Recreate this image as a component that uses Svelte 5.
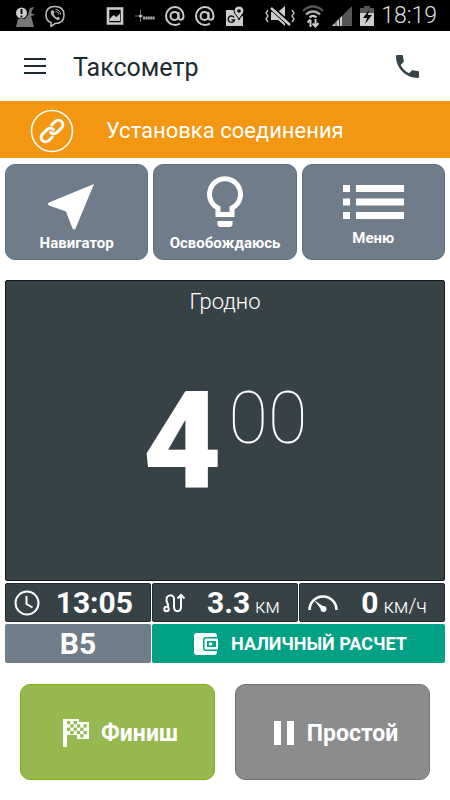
<script>
  let city = 'Гродно';
  let fare = { whole: '4', cents: '00' };
  let tariff = 'B5';

  let readings = [
    { icon: 'clock', value: '13:05', unit: '' },
    { icon: 'route', value: '3.3', unit: 'км' },
    { icon: 'gauge', value: '0', unit: 'км/ч' }
  ];

  // column and row of each dark cell of the finish flag
  let cells = [
    [0, 0], [2, 0], [1, 1], [3, 1], [5, 1], [0, 2], [2, 2], [4, 2],
    [1, 3], [3, 3], [5, 3], [4, 4]
  ];
</script>

<div class="screen">
  <div class="status">
    <div class="notes">
      <svg width="20" height="22" viewBox="0 0 20 22">
        <path d="M3 14h7l3-4 2-7 4-1-3 6 4 2-4 1 3 11H1z" fill="#777" />
        <circle cx="6.500" cy="8" r="5.500" fill="#ccc" />
        <path d="M6.500 4v5M6.500 10.500v2" stroke="#111" stroke-width="2" />
      </svg>
      <svg width="20" height="22" viewBox="0 0 20 22" fill="none" stroke="#bbb">
        <path d="M10 1.500c6 0 9 2.500 9 8.500 0 6-3 8.500-9 8.500l-4 3v-4C2.500 16.500 1 14 1 10c0-6 3-8.500 9-8.500z" stroke-width="1.600" />
        <path d="M6.500 5.500c-3 2 3 9.500 7 9.500 2-1 1.500-2 0-3l-2 .5c-1-.5-2.500-2.500-3-4l1-1c-.5-2-1.500-2.500-3-2z" fill="#bbb" stroke="none" />
        <path d="M10.500 4.500c3 0 5 2 5 5M10.500 6.500c2 0 3 1 3 3" />
      </svg>
      <span class="blank"></span>
      <svg width="20" height="22" viewBox="0 0 20 22">
        <path d="M3 3.500h14v15H3z" fill="none" stroke="#ccc" stroke-width="2.600" />
        <path d="M4.500 16v-2l4-4 3 2 3.500-3.500V16z" fill="#ccc" />
      </svg>
      <svg width="20" height="22" viewBox="0 0 20 22">
        <path d="M0 11h8M5.500 5v12" stroke="#777" />
        <circle cx="5.500" cy="11" r="1.500" fill="#ccc" />
        <path d="M8 13h12" stroke="#aaa" stroke-width="3" stroke-dasharray="2 .4" />
      </svg>
      {#each [1, 2] as mail (mail)}
        <svg width="20" height="22" viewBox="0 0 20 22" fill="none" stroke="#ccc" stroke-width="2">
          <circle cx="9.500" cy="11" r="4" />
          <path d="M13.500 7v5.500c0 3 5 3.500 5-1.500 0-5-3.500-9-8.700-9A8.800 9 0 0 0 1 11c0 5 4 9 9 9 2 0 3.500-.5 5-1.500" />
        </svg>
      {/each}
      <svg width="20" height="22" viewBox="0 0 20 22">
        <path d="M1 5h10l3 9 3-3h1v10H1z" fill="#ccc" />
        <path d="M9 12.300A3.200 3.200 0 1 0 9.500 15H6.500" fill="none" stroke="#111" stroke-width="1.400" />
        <path d="M14 1a5 5 0 0 0-5 5c0 3 4 5 5 9 1-4 5-6 5-9a5 5 0 0 0-5-5z" fill="#ccc" stroke="#000" />
        <circle cx="14" cy="6" r="1.800" fill="#000" />
      </svg>
    </div>
    <div class="system">
      <svg width="30" height="22" viewBox="0 0 30 22">
        <path d="M6 7h7l7-6v20l-7-6H6z" fill="#ccc" />
        <path d="M5 1.500l21 19" stroke="#000" stroke-width="5" />
        <path d="M6 3l19 17" stroke="#ccc" stroke-width="2.500" />
        <path d="M3 5l-2 3 2 3-2 3 2 3M27 5l2 3-2 3 2 3-2 3" fill="none" stroke="#bbb" stroke-width="1.400" />
      </svg>
      <svg width="22" height="24" viewBox="0 0 22 24" fill="none" stroke-width="2.400">
        <path d="M1 7c6-6 14-6 20 0" stroke="#555" />
        <path d="M4 10.500c4-4 10-4 14 0" stroke="#aaa" />
        <path d="M7.500 13.500c2-2 5-2 7 0" stroke="#ccc" />
        <path d="M8.500 23v-7M5.500 18.500l3-3M13.500 15v7M16.500 19l-3 3.500-3-3" stroke="#ccc" stroke-width="2" />
      </svg>
      <svg width="22" height="22" viewBox="0 0 22 22">
        <path d="M21 1v20H1z" fill="#555" />
        <path d="M11 11v10H1z" fill="#ccc" />
        <path d="M5 15v6M8.500 12v9" stroke="#333" />
      </svg>
      <svg width="14" height="22" viewBox="0 0 14 22">
        <path d="M4 1h6v2h4v6H0V3h4z" fill="#555" />
        <path d="M0 8h14v13H0z" fill="#ccc" />
        <path d="M9 5l-6 8h4l-2 6 7-9H8z" fill="#000" />
      </svg>
      <time>18:19</time>
    </div>
  </div>

  <header>
    <button class="plain" aria-label="Открыть меню">
      <svg width="22" height="16" viewBox="0 0 22 16" stroke="#1d2a2f" stroke-width="2">
        <path d="M0 1h22M0 8h22M0 15h22" />
      </svg>
    </button>
    <h1>Таксометр</h1>
    <button class="plain" aria-label="Позвонить">
      <svg width="23" height="23" viewBox="3 3 18 18" fill="#374347">
        <path d="M6.620 10.790c1.440 2.830 3.760 5.140 6.590 6.590l2.200-2.200c.27-.27.67-.36 1.020-.24 1.120.37 2.330.57 3.570.57.55 0 1 .45 1 1V20c0 .55-.45 1-1 1-9.390 0-17-7.610-17-17 0-.55.45-1 1-1h3.500c.55 0 1 .45 1 1 0 1.250.2 2.450.57 3.570.11.35.03.74-.25 1.020l-2.200 2.200z" />
      </svg>
    </button>
  </header>

  <div class="banner">
    <svg width="44" height="44" viewBox="0 0 44 44" fill="none" stroke="#fff">
      <circle cx="22" cy="22" r="20.500" stroke-width="1.600" />
      <g transform="rotate(-45 22 22)" stroke-width="3" stroke-linecap="round">
        <path d="M18 26.500h-5a4.500 4.500 0 0 1-4.500-4.500 4.500 4.500 0 0 1 4.500-4.500h6.500a4.500 4.500 0 0 1 4.500 4.500" />
        <path d="M26 17.500h5a4.500 4.500 0 0 1 4.500 4.500 4.500 4.500 0 0 1-4.500 4.500h-6.500a4.500 4.500 0 0 1-4.500-4.500" />
      </g>
    </svg>
    <span>Установка соединения</span>
  </div>

  <nav>
    <button>
      <svg width="58" height="46" viewBox="0 0 58 46" fill="#fff">
        <path d="M46 0L1 18.500q-2 1.500 0 3l17 6 6.500 17q1.500 2 3 0z" />
      </svg>
      Навигатор
    </button>
    <button>
      <svg width="36" height="54" viewBox="0 0 36 54">
        <path d="M11 38.500V32a15.500 15.500 0 1 1 14 0v6.500z" fill="none" stroke="#fff" stroke-width="5" />
        <path d="M10.500 45h15v3q0 3-3 3h-9q-3 0-3-3z" fill="#fff" />
      </svg>
      Освобождаюсь
    </button>
    <button class="list">
      <svg width="62" height="36" viewBox="0 0 62 36" stroke="#fff" stroke-width="7">
        <path d="M1 4.500h7M14 4.500h48M1 18h7M14 18h48M1 31.500h7M14 31.500h48" />
      </svg>
      Меню
    </button>
  </nav>

  <main>
    <section class="fare">
      <h2>{city}</h2>
      <p><strong>{fare.whole}</strong><span>{fare.cents}</span></p>
    </section>

    <div class="readings">
      {#each readings as item (item.icon)}
        <div class="reading">
          {#if item.icon === 'clock'}
            <svg width="26" height="26" viewBox="0 0 26 26" fill="none" stroke="#fff" stroke-width="2">
              <circle cx="13" cy="13" r="11.500" />
              <path d="M12.500 6v8l6 3.500" />
            </svg>
          {:else if item.icon === 'route'}
            <svg width="26" height="20" viewBox="-2 0 26 20" fill="none" stroke="#fff" stroke-width="2">
              <circle cx="3.500" cy="16" r="2.200" />
              <path d="M4.500 14c2-2-1-4-1-7 0-6 7.500-6 7.500-1v8c0 5.500 7 5.500 7 0V2M14.500 5.500L18 2l3.500 3.500" />
            </svg>
          {:else}
            <svg width="30" height="20" viewBox="1 0 30 20" fill="none" stroke="#fff">
              <path d="M2.500 17a13.500 13.500 0 0 1 27 0" stroke-width="2.600" />
              <path d="M7 7l11 7.500-3 3z" fill="#fff" stroke="none" />
              <circle cx="16.500" cy="16" r="3" fill="#fff" stroke="none" />
            </svg>
          {/if}
          <p><strong>{item.value}</strong>{#if item.unit}&nbsp;<span>{item.unit}</span>{/if}</p>
        </div>
      {/each}
    </div>

    <div class="payment">
      <button class="tariff">{tariff}</button>
      <button class="cash">
        <svg width="25" height="24" viewBox="0 0 25 24">
          <path d="M3 1h17q3 0 3 3v1H12q-3 0-3 3v8q0 3 3 3h11v1q0 3-3 3H3q-3 0-3-3V4q0-3 3-3z" fill="#fff" />
          <path d="M12 6.500h12v11H12q-1.500 0-1.500-1.500V8q0-1.500 1.500-1.500z" fill="#fff" />
          <path d="M13 9h9v6h-9z" fill="#00a185" />
          <circle cx="16.500" cy="12" r="1.800" fill="#fff" />
        </svg>
        НАЛИЧНЫЙ РАСЧЕТ
      </button>
    </div>
  </main>

  <footer>
    <button class="finish">
      <svg width="26" height="28" viewBox="0 0 26 28">
        <path d="M0 0h16v3h10v17H14v-4H4v12H0z" fill="#fff" />
        <g transform="translate(4 2) scale(3.300)" fill="#95b84f">
          {#each cells as [x, y] (`${x}-${y}`)}
            <rect {x} {y} width="1" height="1" />
          {/each}
        </g>
      </svg>
      Финиш
    </button>
    <button class="idle">
      <svg width="22" height="24" viewBox="0 0 22 24" fill="#fff">
        <path d="M1 0h7v24H1zM14 0h7v24h-7z" />
      </svg>
      Простой
    </button>
  </footer>
</div>

<style>
  :global(body) {
    margin: 0;
    background: #fff;
  }

  .screen {
    font-family: Roboto, 'Noto Sans', sans-serif;
    color: #fff;
  }

  svg {
    display: block;
    flex: none;
  }

  button {
    display: flex;
    align-items: center;
    justify-content: center;
    box-sizing: border-box;
    margin: 0;
    padding: 0;
    border: 0;
    font-family: inherit;
    font-weight: 700;
    color: #fff;
    cursor: pointer;
  }

  h1,
  h2,
  p {
    margin: 0;
    font-weight: 400;
  }

  .status {
    display: flex;
    justify-content: space-between;
    height: 31px;
    padding: 0 13px 0 15px;
    background: #000;
  }

  .notes,
  .system {
    display: flex;
    align-items: center;
    gap: 10px;
  }

  .system {
    gap: 7px;
  }

  .blank {
    width: 20px;
  }

  time {
    font-size: 23px;
    font-weight: 300;
    line-height: 32px;
    color: #ddd;
  }

  header {
    display: flex;
    align-items: center;
    gap: 27px;
    height: 70px;
    padding: 0 31px 0 24px;
  }

  .plain {
    background: none;
  }

  h1 {
    flex: 1;
    padding-top: 4px;
    font-size: 25px;
    line-height: 30px;
    color: #1d2a2f;
  }

  .banner {
    display: flex;
    align-items: center;
    gap: 32px;
    box-sizing: border-box;
    height: 57px;
    padding: 2px 30px 0;
    background: #f39712;
    font-size: 22px;
    line-height: 28px;
  }

  nav {
    display: grid;
    grid-template-columns: repeat(3, 1fr);
    gap: 5px;
    padding: 6px 5px 20px;
  }

  nav button {
    flex-direction: column;
    justify-content: flex-end;
    gap: 4px;
    height: 96px;
    padding-bottom: 7px;
    border: 1px solid #5a6e84;
    border-radius: 10px;
    background: #6f7c89;
    font-size: 15px;
    line-height: 18px;
  }

  nav .list {
    gap: 9px;
    padding-bottom: 12px;
  }

  main {
    display: grid;
    gap: 2px;
    padding: 0 5px;
  }

  .fare {
    height: 301px;
    box-sizing: border-box;
    border: 1px solid #111a1d;
    border-radius: 2px;
    background: #374246;
    text-align: center;
  }

  h2 {
    padding-top: 6px;
    font-size: 22px;
    font-weight: 300;
    line-height: 30px;
  }

  .fare p {
    display: flex;
    justify-content: center;
    gap: 7px;
    padding-top: 44px;
  }

  .fare strong {
    font-size: 136px;
    font-weight: 900;
    line-height: 160px;
  }

  .fare span {
    padding-top: 14px;
    font-size: 72px;
    font-weight: 100;
    line-height: 88px;
  }

  .readings,
  .payment {
    display: grid;
    grid-template-columns: repeat(3, 1fr);
    gap: 1px;
  }

  .reading {
    display: flex;
    align-items: center;
    box-sizing: border-box;
    height: 39px;
    padding: 0 17px 0 8px;
    border: 1px solid #202c30;
    border-radius: 2px;
    background: #374246;
  }

  .reading p {
    flex: 1;
    padding-top: 4px;
    font-size: 20px;
    font-weight: 300;
    line-height: 36px;
    text-align: right;
    white-space: nowrap;
  }

  .reading strong {
    font-size: 30px;
    font-weight: 700;
  }

  .payment button {
    height: 39px;
    border-radius: 2px;
  }

  .tariff {
    background: #6f7c89;
    font-size: 30px;
  }

  .payment .cash {
    grid-column: span 2;
    gap: 12px;
    padding-left: 4px;
    background: #00a185;
    font-size: 18px;
  }

  footer {
    display: grid;
    grid-template-columns: 1fr 1fr;
    gap: 20px;
    padding: 21px 20px 20px;
  }

  footer button {
    gap: 12px;
    height: 96px;
    padding: 2px 0 0 6px;
    border: 1px solid #82ad1c;
    border-radius: 10px;
    font-size: 23px;
  }

  .finish {
    background: #95b84f;
  }

  footer .idle {
    border-color: #747576;
    background: #8b8c8d;
  }
</style>
